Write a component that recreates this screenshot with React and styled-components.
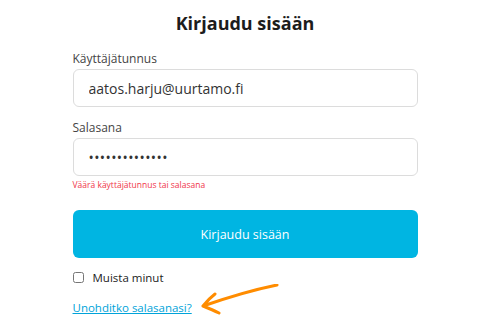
import React from 'react';
import styled, { createGlobalStyle } from 'styled-components';

const GlobalStyle = createGlobalStyle`
    body {
        margin: 0;
        background: #ffffff;
        font-family: "Open Sans", "Noto Sans", sans-serif;
        color: #212529;
    }
`

const Form = styled.form`
    width: 345px;
    margin: 0 auto;
    padding-top: 9px;
    display: flex;
    flex-direction: column;
`

const Title = styled.h1`
    margin: 0 0 14px;
    text-align: center;
    font-size: 18px;
    line-height: 28px;
    font-weight: 700;
    color: #1c1c1c;
`

const Label = styled.label`
    font-size: 12px;
    line-height: 16px;
    color: #444;
    margin-bottom: 2px;
`

const Input = styled.input`
    box-sizing: border-box;
    height: 38px;
    width: 100%;
    border: 1px solid #dcdcdc;
    border-radius: 6px;
    padding: 0 15px;
    font-family: inherit;
    font-size: 14px;
    letter-spacing: ${props => props.type === 'password' ? '0.4px' : '0'};
    color: #333;
    outline: none;
    margin-bottom: ${props => props.gap || 0}px;
`

const ErrorText = styled.p`
    margin: 3px 0 19px;
    font-size: 8.5px;
    line-height: 12px;
    color: #f0364a;
`

const SubmitButton = styled.button`
    height: 48px;
    border: none;
    border-radius: 6px;
    background-color: #00b5e2;
    color: #ffffff;
    font-family: inherit;
    font-size: 12.5px;
    cursor: pointer;
`

const CheckRow = styled.label`
    display: flex;
    align-items: center;
    gap: 9px;
    margin-top: 12px;
    font-size: 11.5px;
    color: #222;

    input {
        margin: 0;
        width: 11px;
        height: 11px;
    }
`

const LinkRow = styled.div`
    position: relative;
    margin-top: 13px;
    line-height: 16px;
`

const ForgotLink = styled.a`
    font-size: 11.5px;
    color: #00a3d9;
    text-decoration: underline;
`

const Arrow = styled.svg`
    position: absolute;
    left: 126px;
    top: -14px;
`

export default function App() {
    return (
        <>
            <GlobalStyle />
            <Form onSubmit={e => e.preventDefault()}>
                <Title>Kirjaudu sisään</Title>
                <Label>Käyttäjätunnus</Label>
                <Input type="text" defaultValue="aatos.harju@uurtamo.fi" gap={13} />
                <Label>Salasana</Label>
                <Input type="password" defaultValue="aatosharju1234" />
                <ErrorText>Väärä käyttäjätunnus tai salasana</ErrorText>
                <SubmitButton type="submit">Kirjaudu sisään</SubmitButton>
                <CheckRow>
                    <input type="checkbox" />
                    Muista minut
                </CheckRow>
                <LinkRow>
                    <ForgotLink href="#">Unohditko salasanasi?</ForgotLink>
                    <Arrow width="84" height="36" viewBox="0 0 84 36">
                        <path d="M78 1 C58 5 30 13 4 22 M4 22 C8 17 12 13 16 10 M4 22 C9 24 14 26 20 29"
                            fill="none" stroke="#ff8c00" strokeWidth="3" strokeLinecap="round" />
                    </Arrow>
                </LinkRow>
            </Form>
        </>
    )
}
